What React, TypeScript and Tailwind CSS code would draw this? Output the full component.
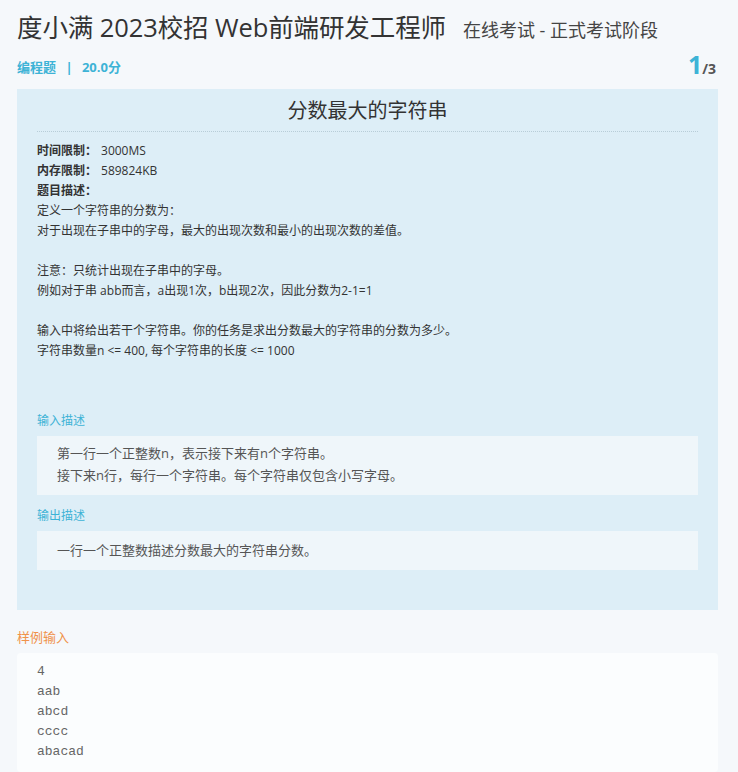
import React from "react";

const font = { fontFamily: '"Open Sans", "Noto Sans CJK SC", sans-serif' };

export default function App() {
  return (
    <div className="min-h-[772px] w-[738px] bg-[#f5f8fb] text-[#333]" style={font}>
      <div className="pl-[17px] pr-[20px]">
        <div className="flex items-baseline pt-[9px] h-[50px]">
          <span className="text-[25.5px] leading-[36px] text-[#333] tracking-[-0.1px]">度小满 2023校招 Web前端研发工程师</span>
          <span className="ml-[17px] text-[18px] text-[#444]">在线考试 - 正式考试阶段</span>
        </div>
        <div className="flex items-end justify-between h-[39px] pb-[12px]">
          <div className="text-[13px] font-bold text-[#3db3d6] leading-[20px]">
            编程题 <span className="mx-[6px]">|</span> 20.0分
          </div>
          <div className="flex items-baseline leading-none mr-[2px]">
            <span className="text-[25px] font-bold text-[#3db3d6]">1</span>
            <span className="text-[14px] font-bold text-[#555]">/3</span>
          </div>
        </div>

        <div className="bg-[#ddeef7] px-[20px] pt-[8px] pb-[40px]">
          <div className="text-center text-[20px] leading-[28px] text-[#333] pb-[6px] border-b border-dotted border-[#b8cdd8]">
            分数最大的字符串
          </div>
          <div className="pt-[9px] text-[12px] leading-[20px] text-[#333]">
            <div><b>时间限制：</b><span className="ml-[4px]">3000MS</span></div>
            <div><b>内存限制：</b><span className="ml-[4px]">589824KB</span></div>
            <div><b>题目描述：</b></div>
            <div>定义一个字符串的分数为：</div>
            <div>对于出现在子串中的字母，最大的出现次数和最小的出现次数的差值。</div>
            <div className="h-[20px]" />
            <div>注意：只统计出现在子串中的字母。</div>
            <div>例如对于串 abb而言，a出现1次，b出现2次，因此分数为2-1=1</div>
            <div className="h-[20px]" />
            <div>输入中将给出若干个字符串。你的任务是求出分数最大的字符串的分数为多少。</div>
            <div>字符串数量n &lt;= 400, 每个字符串的长度 &lt;= 1000</div>
          </div>

          <div className="mt-[50px] text-[12px] leading-[20px] text-[#3db3d6]">输入描述</div>
          <div className="mt-[5px] bg-[#eff6fa] px-[20px] pt-[6px] pb-[9px] text-[13px] leading-[22px] text-[#555]">
            <div>第一行一个正整数n，表示接下来有n个字符串。</div>
            <div>接下来n行，每行一个字符串。每个字符串仅包含小写字母。</div>
          </div>

          <div className="mt-[11px] text-[12px] leading-[20px] text-[#3db3d6]">输出描述</div>
          <div className="mt-[5px] bg-[#eff6fa] px-[20px] pt-[8px] pb-[9px] text-[13px] leading-[22px] text-[#555]">
            <div>一行一个正整数描述分数最大的字符串分数。</div>
          </div>
        </div>

        <div className="mt-[17px] text-[13px] leading-[20px] text-[#f0924a]">样例输入</div>
        <div
          className="mt-[6px] bg-[#fbfdfe] rounded-[4px] px-[20px] pt-[9px] pb-[10px] text-[13px] leading-[20px] text-[#666]"
          style={{ fontFamily: '"Liberation Mono", "DejaVu Sans Mono", monospace' }}
        >
          <div>4</div>
          <div>aab</div>
          <div>abcd</div>
          <div>cccc</div>
          <div>abacad</div>
        </div>
      </div>
    </div>
  );
}
